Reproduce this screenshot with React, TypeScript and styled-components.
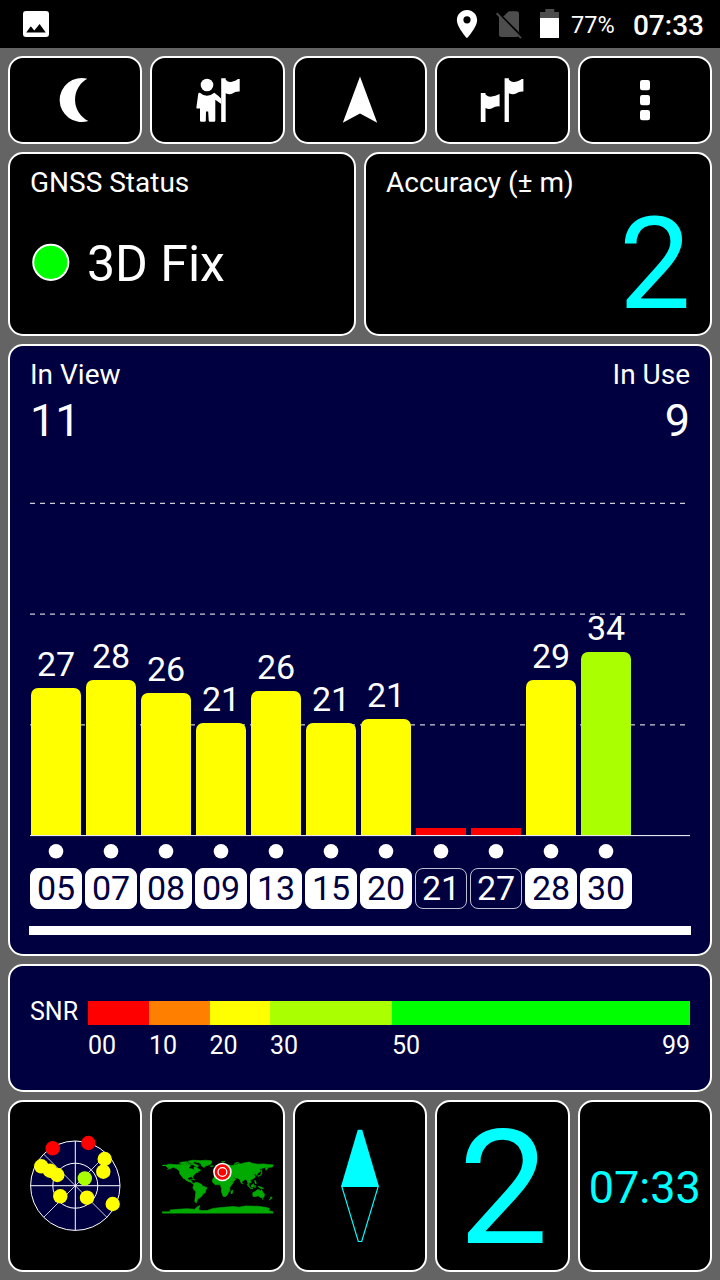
import React from 'react';
import styled, { createGlobalStyle } from 'styled-components';

const NAVY = '#000040';
const CYAN = '#00ffff';
const YELLOW = '#ffff00';
const LIME = '#aaff00';
const RED = '#ff0000';

const GlobalStyle = createGlobalStyle`
  * { box-sizing: border-box; }
  body { margin: 0; background: #646464; }
  svg { display: block; flex: none; }
`;

const Screen = styled.div`
  width: 720px;
  height: 1280px;
  background: #646464;
  color: #fff;
  font-family: Roboto, 'Liberation Sans', sans-serif;
  display: flex;
  flex-direction: column;
`;

const StatusBar = styled.header`
  height: 48px;
  flex: none;
  background: #000;
  display: flex;
  justify-content: space-between;
  align-items: flex-start;
  padding: 0 16px 0 23px;
`;

const StatusGroup = styled.div`
  display: flex;
  align-items: flex-start;
  width: 248px;
`;

const BatteryText = styled.span`
  font-size: 23.5px;
  line-height: 32px;
  margin: 9px 0 0 11px;
  width: 62px;
`;

const StatusClock = styled.span`
  font-size: 28px;
  font-weight: 500;
  line-height: 32px;
  margin-top: 10px;
`;

const Dashboard = styled.main`
  flex: 1;
  padding: 8px;
  display: grid;
  grid-template-rows: 88px 184px 612px 128px 172px;
  gap: 8px;
`;

const Row = styled.div<{ $columns: number }>`
  display: grid;
  grid-template-columns: repeat(${(p) => p.$columns}, 1fr);
  gap: 8px;
`;

const Panel = styled.section<{ $navy?: boolean }>`
  border: 2px solid #fff;
  border-radius: 15px;
  background: ${(p) => (p.$navy ? NAVY : '#000')};
  padding: 13px 20px 0;
  min-width: 0;
`;

const Tile = styled.button`
  border: 2px solid #fff;
  border-radius: 15px;
  background: #000;
  padding: 0;
  font: inherit;
  color: ${CYAN};
  min-width: 0;
  display: flex;
  align-items: center;
  justify-content: center;
`;

const Label = styled.div`
  font-size: 28px;
  line-height: 32px;
  white-space: nowrap;
`;

const FixRow = styled.div`
  display: flex;
  align-items: center;
  height: 60px;
  margin-top: 35px;
  gap: 17px;
  padding-left: 2px;
`;

const FixText = styled.span`
  font-size: 50px;
  line-height: 60px;
`;

const AccuracyValue = styled.div`
  font-size: 128px;
  line-height: 128px;
  margin: 1px -1px 0 0;
  text-align: right;
  color: ${CYAN};
`;

const CountRow = styled.div`
  display: flex;
  justify-content: space-between;
  height: 86px;
`;

const CountBlock = styled.div<{ $right?: boolean }>`
  text-align: ${(p) => (p.$right ? 'right' : 'left')};
`;

const Count = styled.div`
  font-size: 45px;
  line-height: 50px;
  margin-top: 5px;
`;

const Plot = styled.div`
  position: relative;
  height: 391px;
`;

const GridLines = styled.svg`
  position: absolute;
  left: 0;
  top: 0;
`;

const Bars = styled.div`
  position: relative;
  height: 390px;
  display: flex;
  align-items: flex-end;
  gap: 5px;
  padding-left: 1px;
`;

const BarColumn = styled.div`
  width: 50px;
  display: flex;
  flex-direction: column;
  align-items: center;
`;

const BarValue = styled.span`
  font-size: 34px;
  line-height: 40px;
  margin-bottom: 4px;
`;

const Bar = styled.div<{ $height: number; $color: string; $flat?: boolean }>`
  width: 50px;
  height: ${(p) => p.$height}px;
  background: ${(p) => p.$color};
  border-radius: ${(p) => (p.$flat ? '0' : '7px 7px 0 0')};
`;

const DotRow = styled.div`
  display: flex;
  gap: 39px;
  padding: 7px 0 0 18px;
  height: 32px;
`;

const ChipRow = styled.div`
  display: flex;
  gap: 3px;
`;

const Chip = styled.span<{ $used: boolean }>`
  width: 52px;
  height: 41px;
  border: 1px solid ${(p) => (p.$used ? '#fff' : 'rgba(255, 255, 255, 0.75)')};
  border-radius: 8px;
  background: ${(p) => (p.$used ? '#fff' : 'transparent')};
  color: ${(p) => (p.$used ? NAVY : '#fff')};
  font-size: 34px;
  line-height: 39px;
  text-align: center;
`;

const ScrollTrack = styled.div`
  height: 9px;
  margin: 17px -1px 0;
  background: #fff;
`;

const Legend = styled.div`
  display: grid;
  grid-template-columns: 58px 61px 60.5px 60.5px 122px 1fr;
  grid-template-rows: 24px 32px;
  row-gap: 5px;
  margin-top: 22px;
  font-size: 25px;
`;

const LegendTitle = styled.span`
  line-height: 22px;
`;

const Segment = styled.span<{ $color: string }>`
  background: ${(p) => p.$color};
`;

const Tick = styled.span`
  line-height: 32px;
  display: flex;
  justify-content: space-between;
`;

const BigValue = styled.span`
  font-size: 160px;
  line-height: 160px;
  padding: 5px 0 0 2px;
`;

const ClockValue = styled.span`
  font-size: 45px;
  line-height: 50px;
  padding-top: 4px;
`;

const satellites = [
  { id: '05', snr: 27, height: 147, used: true },
  { id: '07', snr: 28, height: 155, used: true },
  { id: '08', snr: 26, height: 142, used: true },
  { id: '09', snr: 21, height: 112, used: true },
  { id: '13', snr: 26, height: 144, used: true },
  { id: '15', snr: 21, height: 112, used: true },
  { id: '20', snr: 21, height: 116, used: true },
  { id: '21', snr: 0, height: 7, used: false },
  { id: '27', snr: 0, height: 7, used: false },
  { id: '28', snr: 29, height: 155, used: true },
  { id: '30', snr: 34, height: 183, used: true },
];

const snrColor = (snr: number) => (snr === 0 ? RED : snr < 30 ? YELLOW : LIME);

const FixLight = () => (
  <svg width="38" height="43" viewBox="32 243 38 43">
    <circle cx="50.800" cy="262.300" r="17.600" fill="#00ff00" stroke="#fff" strokeWidth="2" />
  </svg>
);

const Dot = () => (
  <svg width="16" height="16" viewBox="0 0 16 16">
    <circle cx="8" cy="8.300" r="7.300" fill="#fff" />
  </svg>
);

const PictureIcon = () => (
  <svg width="26" height="37" viewBox="23 0 26 37">
    <rect x="23" y="11" width="26" height="26" rx="3" fill="#fff" />
    <path d="M26.2 32.6 30.8 26.2 34.3 30.4 39.6 24 45.8 32.6Z" fill="#000" />
  </svg>
);

const StatusIcons = () => (
  <svg width="104" height="40" viewBox="456 0 104 40" fill="#fff">
    <path
      fillRule="evenodd"
      d="M467 9.900c-5.600 0-10.100 4.400-10.100 10 0 7.400 10.100 18.200 10.100 18.200s10.100-10.800 10.100-18.200c0-5.600-4.500-10-10.100-10zm0 13.500a3.600 3.600 0 1 1 0-7.200 3.600 3.600 0 0 1 0 7.200z"
    />
    <g fill="#4d4d4d">
      <path d="M508.800 11.300H516.500a2.500 2.500 0 0 1 2.500 2.500V32.200L503.300 16.600Z" />
      <path d="M497.300 12.600 521.600 37.400 520.300 38.700 518.200 36.600Q517.500 37 516.500 37H501.500A2.500 2.500 0 0 1 499 34.500V17L496 13.900Z" />
      <path d="M545.300 9h9v3h4.700v6.500h-19V12h5.300z" />
    </g>
    <rect x="540" y="18" width="19" height="20" />
  </svg>
);

const MoonIcon = () => (
  <svg width="30" height="46" viewBox="60 77 30 46" fill="#fff" overflow="visible">
    <path d="M87.300 78.700A22 22 0 1 0 88.400 120.900A23.800 23.800 0 0 1 87.300 78.700Z" />
  </svg>
);

const PersonFlagIcon = () => (
  <svg width="46" height="46" viewBox="195 77 46 46" fill="#fff">
    <circle cx="207" cy="85" r="6.300" />
    <path d="M199.800 92.700Q203.500 95.800 207 95.800 210.500 95.800 214.300 92.700 217.800 95.200 221.300 98.700V104L215.300 99.700V120.500Q215.300 121.700 214 121.700H210Q208.800 121.700 208.700 120.500L208.200 111.500H206L205.800 120.500Q205.800 121.700 204.500 121.700H201.200Q200 121.700 200 120.500V108.500H197Q196.300 108.500 196.400 107.500L198.200 94Q198.500 92.400 199.800 92.700Z" />
    <path d="M221.200 78.300H225.700V79.700Q228 82.500 231 82 236 81.200 238 79H239.700V91.600Q235.500 91.200 232.500 93.500 229.500 95 225.700 93.200V122H221.200Z" />
  </svg>
);

const ArrowIcon = () => (
  <svg width="36" height="48" viewBox="342 76 36 48" fill="#fff">
    <path d="M360 76.500 377.200 122.700 360 113.600 342.800 122.700Z" />
  </svg>
);

const FlagsIcon = () => (
  <svg width="46" height="46" viewBox="479.400 77 46 46" fill="#fff">
    <path d="M481.200 93H485.900V94.500Q488.500 97 491 96.800 496 96 500 94V106.400Q495.500 106 493 108 489.500 110 485.900 108V122H481.200Z" />
    <path d="M505 78.300H509.300V79.700Q512 82.500 514.800 82 520 81.200 522 79H523.800V91.600Q519.500 91.200 516.500 93.500 513 95 509.300 93.200V122H505Z" />
  </svg>
);

const MenuIcon = () => (
  <svg width="10" height="42" viewBox="0 0 10 42" fill="#fff">
    <rect y="1" width="10" height="10.300" rx="2.300" />
    <rect y="16" width="10" height="10.300" rx="2.300" />
    <rect y="31" width="10" height="10.300" rx="2.300" />
  </svg>
);

const skyDots: [number, number, string][] = [
  [52.7, 1148.3, RED],
  [88.3, 1143, RED],
  [41.3, 1166.3, YELLOW],
  [50, 1170.7, YELLOW],
  [57.3, 1175, YELLOW],
  [104.7, 1159, YELLOW],
  [103.3, 1171.7, YELLOW],
  [60.3, 1196.3, YELLOW],
  [87, 1197.7, YELLOW],
  [112.7, 1204, YELLOW],
  [84.8, 1178.4, LIME],
];

const SkyPlot = () => (
  <svg width="100" height="104" viewBox="25 1134 100 104">
    <g stroke="#fff" fill="none">
      <circle cx="75.300" cy="1185.700" r="44.700" fill={NAVY} />
      <circle cx="75.300" cy="1185.700" r="22.500" />
      <path d="M30.500 1185.700H120M75.300 1141V1230.500" />
      <path d="M43.700 1217.300 106.900 1154.100M43.700 1154.100 106.900 1217.300" strokeWidth="0.800" />
    </g>
    {skyDots.map(([x, y, color]) => (
      <circle key={`${x}-${y}`} cx={x} cy={y} r="7.200" fill={color} />
    ))}
  </svg>
);

/* Coordinates are longitude and negated latitude, in degrees. */
const landMasses = [
  '-168,-66 -162,-71 -150,-71 -135,-69 -125,-70 -115,-68 -100,-68 -92,-69 -88,-66 -94,-60 -92,-57 -82,-55 -79,-51 -77,-56 -77,-62 -70,-61 -64,-57 -56,-52 -58,-49 -66,-49 -62,-45 -70,-43 -75,-38 -81,-31 -80,-25 -84,-30 -90,-29 -97,-27 -97,-21 -91,-19 -87,-21 -88,-16 -83,-14 -83,-9 -78,-8 -81,-7 -88,-12 -96,-15 -105,-20 -112,-29 -108,-24 -110,-23 -117,-32 -124,-40 -124,-48 -133,-56 -145,-61 -153,-57 -164,-54 -157,-59 -165,-61',
  '-120,-70 -116,-75 -105,-73 -96,-74 -92,-72 -80,-74 -70,-70 -62,-66 -66,-62 -74,-65 -80,-69 -90,-71 -105,-68',
  '-125,-75 -115,-78 -100,-79 -95,-77 -105,-75 -118,-73',
  '-96,-81 -82,-84 -62,-83 -76,-79 -80,-75 -92,-76',
  '-73,-78 -60,-82 -40,-84 -20,-82 -20,-75 -24,-70 -40,-65 -44,-60 -52,-65 -54,-70 -60,-76',
  '-85,-22 -77,-21 -74,-20 -79,-23',
  '-78,-8 -72,-12 -62,-10 -52,-5 -50,0 -35,5 -39,15 -41,22 -48,26 -53,34 -58,38 -65,42 -68,50 -70,55 -75,50 -73,37 -71,18 -77,13 -81,5 -78,-2',
  '-24,-65 -14,-66 -14,-64 -20,-63',
  '-10,-37 -9,-43 -2,-43 -4,-48 5,-52 9,-57 8,-54 20,-55 24,-59 30,-60 22,-61 25,-66 18,-60 13,-55 6,-59 10,-64 20,-70 30,-71 41,-67 34,-64 45,-67 60,-69 68,-73 75,-72 85,-75 103,-78 112,-74 130,-71 150,-72 165,-70 180,-69 180,-65 178,-62 163,-60 162,-55 157,-51 156,-58 163,-62 150,-59 136,-55 140,-48 133,-43 128,-39 129,-35 126,-35 124,-40 118,-39 122,-32 120,-26 110,-21 106,-19 109,-12 105,-9 100,-13 103,-2 98,-9 97,-17 90,-22 80,-15 77,-8 72,-20 66,-25 57,-26 50,-30 56,-24 59,-22 52,-15 44,-12 38,-20 33,-29 35,-36 27,-37 24,-41 22,-37 17,-41 13,-45 18,-40 12,-42 4,-43 -1,-37',
  '-17,-21 -10,-31 -6,-36 10,-37 20,-31 32,-31 37,-21 43,-12 51,-12 44,-2 39,5 40,15 35,20 32,28 26,34 18,34 12,18 13,8 9,-1 8,-5 -8,-4 -17,-13',
  '44,16 50,14 47,25 43,24',
  '-6,-50 1,-51 -2,-56 -5,-58 -5,-54',
  '-10,-52 -6,-52 -6,-55 -10,-54',
  '95,-6 103,0 106,6 100,1',
  '109,-2 117,-7 118,-2 115,4 110,3',
  '105,6 115,8 114,9 106,7.5',
  '119,-1 125,-1 121,1 123,5 120,5',
  '120,-18 123,-18 126,-8 122,-8 121,-13',
  '131,1 141,3 150,8 144,8 137,7',
  '131,-31 140,-36 142,-44 145,-43 139,-34 131,-33',
  '142,-54 144,-49 142,-46',
  '114,22 122,18 130,12 136,12 140,17 143,11 147,20 153,27 150,37 141,38 132,32 123,34 115,34',
  '145,41 148,41 147,44',
  '173,35 178,38 173,42 167,46 172,41',
  '53,-71 60,-76 68,-77 58,-72',
  '12,-79 24,-80 20,-77',
  '80,-7 82,-7 81,-10',
  '-180,88 -180,84 -155,84 -155,78 -130,76 -100,74 -75,76 -64,66 -58,64 -62,74 -60,80 -35,80 -15,73 10,70 50,67 70,69 90,65 130,66 160,70 170,74 165,80 180,84 180,88',
];

const WorldMap = () => (
  <svg width="112" height="60" viewBox="162 1156 112 60">
    <g transform="translate(217.700 1186) scale(0.307)" fill="#00aa00" stroke="#00aa00" strokeWidth="2">
      {landMasses.map((points) => (
        <polygon key={points} points={points} />
      ))}
      <path d="M-180 -67H-166M-180 87H180" strokeWidth="4" />
    </g>
    <circle cx="222.400" cy="1172" r="9.300" fill="#fff" />
    <circle cx="222.400" cy="1172" r="7.700" fill={RED} />
    <circle cx="222.400" cy="1172" r="4.400" fill={RED} stroke="#fff" strokeWidth="1.300" />
  </svg>
);

const CompassNeedle = () => (
  <svg width="40" height="116" viewBox="340 1128 40 116">
    <path d="M357.800 1129.700H362.200L379 1186.500H341Z" fill={CYAN} />
    <path d="M341.800 1186.300H378.200L361.700 1241.500H358.300Z" fill="none" stroke={CYAN} strokeWidth="1.200" />
  </svg>
);

export default function App() {
  return (
    <>
      <GlobalStyle />
      <Screen>
        <StatusBar>
          <PictureIcon />
          <StatusGroup>
            <StatusIcons />
            <BatteryText>77%</BatteryText>
            <StatusClock>07:33</StatusClock>
          </StatusGroup>
        </StatusBar>
        <Dashboard>
          <Row $columns={5}>
            <Tile aria-label="Night mode"><MoonIcon /></Tile>
            <Tile aria-label="Mark position"><PersonFlagIcon /></Tile>
            <Tile aria-label="Navigate"><ArrowIcon /></Tile>
            <Tile aria-label="Waypoints"><FlagsIcon /></Tile>
            <Tile aria-label="Menu"><MenuIcon /></Tile>
          </Row>
          <Row $columns={2}>
            <Panel>
              <Label>GNSS Status</Label>
              <FixRow>
                <FixLight />
                <FixText>3D Fix</FixText>
              </FixRow>
            </Panel>
            <Panel>
              <Label>Accuracy (± m)</Label>
              <AccuracyValue>2</AccuracyValue>
            </Panel>
          </Row>
          <Panel $navy>
            <CountRow>
              <CountBlock>
                <Label>In View</Label>
                <Count>11</Count>
              </CountBlock>
              <CountBlock $right>
                <Label>In Use</Label>
                <Count>9</Count>
              </CountBlock>
            </CountRow>
            <Plot>
              <GridLines width="660" height="392" viewBox="0 0 660 392" stroke="#fff">
                <path d="M0 58.300H660M0 169.100H660M0 279.900H660" strokeDasharray="5 5" />
                <path d="M0 390.600H660" />
              </GridLines>
              <Bars>
                {satellites.map((s) => (
                  <BarColumn key={s.id}>
                    {s.snr > 0 && <BarValue>{s.snr}</BarValue>}
                    <Bar $height={s.height} $color={snrColor(s.snr)} $flat={s.snr === 0} />
                  </BarColumn>
                ))}
              </Bars>
            </Plot>
            <DotRow>
              {satellites.map((s) => (
                <Dot key={s.id} />
              ))}
            </DotRow>
            <ChipRow>
              {satellites.map((s) => (
                <Chip key={s.id} $used={s.used}>{s.id}</Chip>
              ))}
            </ChipRow>
            <ScrollTrack />
          </Panel>
          <Panel $navy>
            <Legend>
              <LegendTitle>SNR</LegendTitle>
              <Segment $color={RED} />
              <Segment $color="#ff8000" />
              <Segment $color={YELLOW} />
              <Segment $color={LIME} />
              <Segment $color="#00ff00" />
              <span />
              <Tick>00</Tick>
              <Tick>10</Tick>
              <Tick>20</Tick>
              <Tick>30</Tick>
              <Tick>
                <span>50</span>
                <span>99</span>
              </Tick>
            </Legend>
          </Panel>
          <Row $columns={5}>
            <Tile aria-label="Sky view"><SkyPlot /></Tile>
            <Tile aria-label="World map"><WorldMap /></Tile>
            <Tile aria-label="Compass"><CompassNeedle /></Tile>
            <Tile><BigValue>2</BigValue></Tile>
            <Tile><ClockValue>07:33</ClockValue></Tile>
          </Row>
        </Dashboard>
      </Screen>
    </>
  );
}
